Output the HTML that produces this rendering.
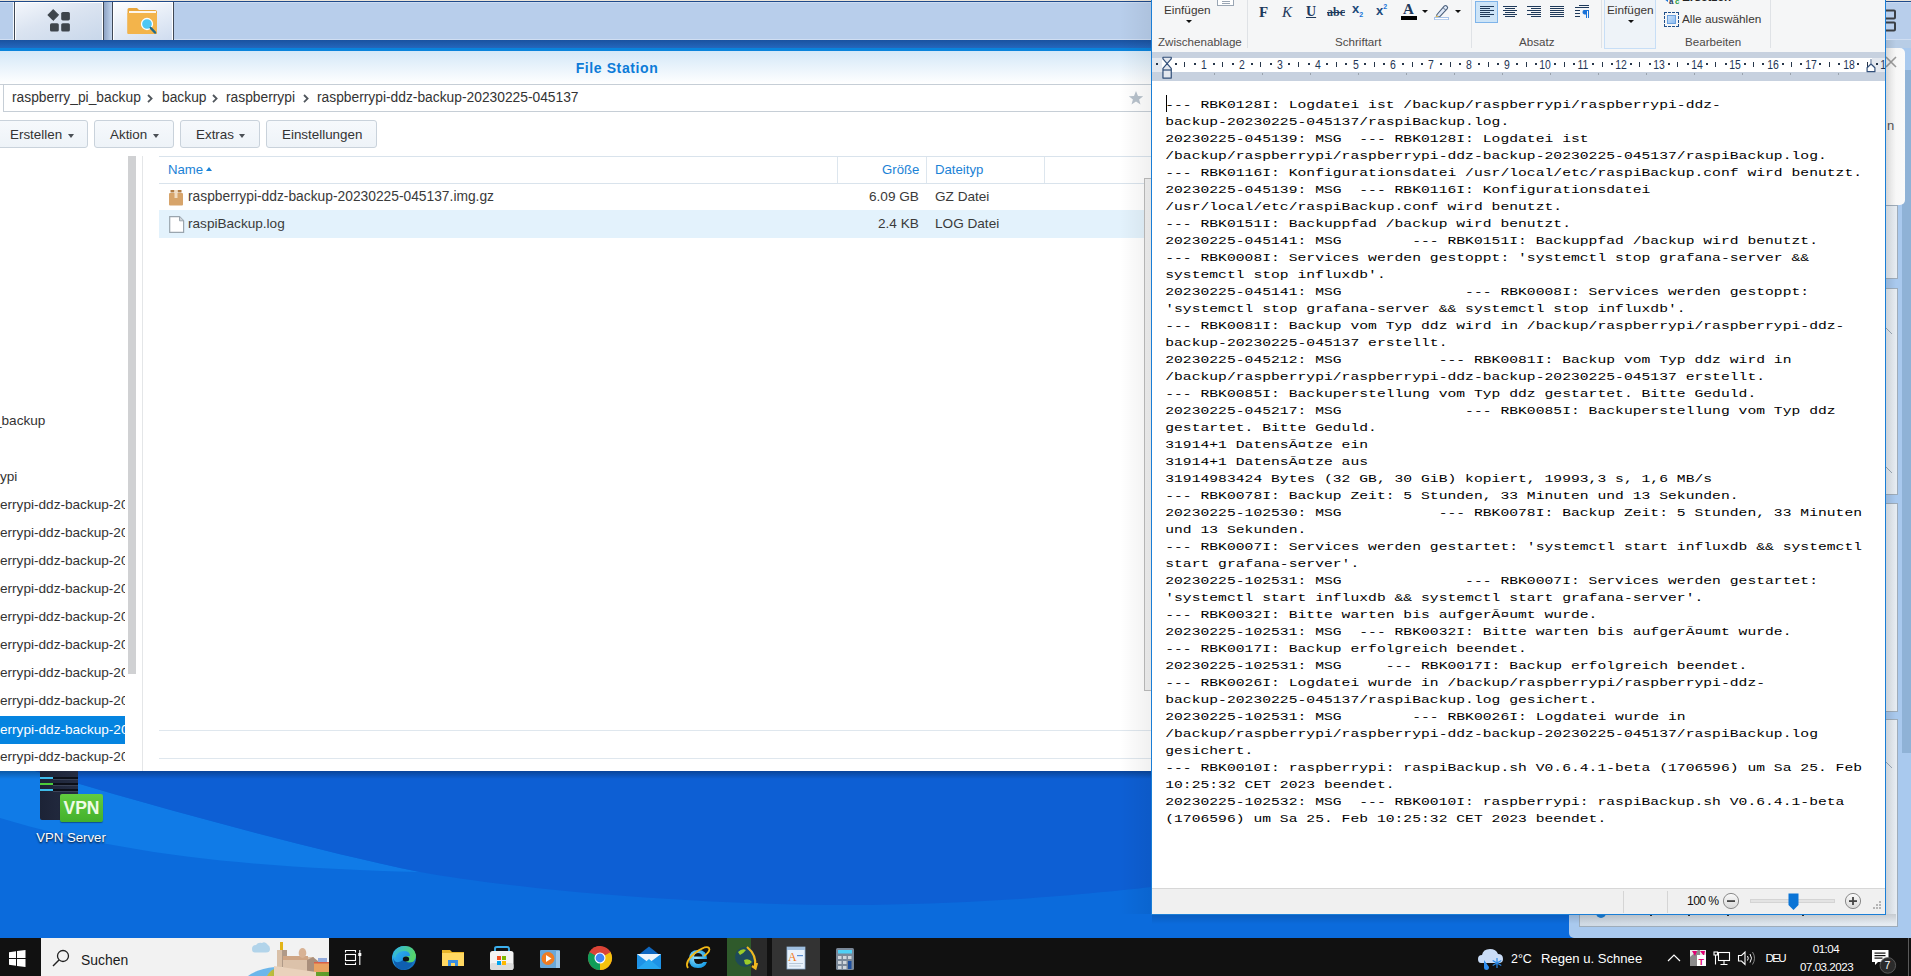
<!DOCTYPE html>
<html><head><meta charset="utf-8">
<style>
*{margin:0;padding:0;box-sizing:border-box}
html,body{width:1911px;height:976px;overflow:hidden;background:#0c62d6;font-family:"Liberation Sans",sans-serif}
.a{position:absolute}
#wall{left:0;top:0;width:1911px;height:976px}
/* DSM taskbar */
#dsmbar{left:0;top:0;width:1911px;height:40px;background:#b8ceeb;border-top:1px solid #ebe5da;box-shadow:inset 0 1px 0 #1f4a8a,inset 0 2px 0 #cddcf0,inset 0 -1px 0 #d0def2}
.dbtn{top:2px;height:38px;border-left:1px solid #3f4856;border-right:1px solid #3f4856;box-shadow:inset 1px 1px 0 #fff,inset -1px 0 0 #fff;background:linear-gradient(160deg,#f4f7fc 0%,#dbe4f1 45%,#c8d7ea 100%)}
/* file station */
#fs{left:0;top:40px;width:1151px;height:731px;background:#fff}
#fsbar{left:0;top:0;width:1151px;height:8px;background:linear-gradient(#1a52a0,#2467bd)}
#fsbar2{left:0;top:8px;width:1151px;height:3px;background:#0a84dc}
#fshead{left:0;top:11px;width:1151px;height:34px;background:linear-gradient(#d4e8f8,#ffffff);border-bottom:1px solid #c9cfd6}
#fstitle{left:0;top:20px;width:1234px;text-align:center;font-weight:bold;font-size:14px;color:#0c7bd8;letter-spacing:0.6px}
.crumb{left:3px;top:44px;width:1148px;height:28px;border:1px solid #c6ced6;border-right:none}
.ct{font-size:13.8px;color:#333;top:50px}
.tb{top:80px;height:28px;border:1px solid #c9d2db;border-radius:3px;background:linear-gradient(#f6f9fc,#eef3f8);font-size:13.4px;color:#333}
.tb span{position:absolute;top:6px}
.caret{position:absolute;width:0;height:0;border-left:3.5px solid transparent;border-right:3.5px solid transparent;border-top:4px solid #4a4f55}
.tree{font-size:13.6px;color:#333;left:0;white-space:nowrap;overflow:hidden;width:125px;height:28px;line-height:28px}
.gh{font-size:13.2px;color:#1b82d6}
.gc{font-size:13.6px;color:#3a3a3a}
/* wordpad */
#wp{left:1151px;top:0;width:735px;height:915px;overflow:hidden;border:1px solid #1a7ed6;border-top:none;background:#fff}
#ribbon{left:0;top:0;width:733px;height:52px;background:#f5f6f7}
.rl{font-size:11.6px;color:#4d4a48;top:35px}
.sep{top:0;width:1px;height:48px;background:#dfe2e6}
#ruler{left:0;top:52px;width:733px;height:29px;background:#c7d1df}
#rwhite{left:10px;top:6px;width:723px;height:14px;background:#fff}
#txt{left:13.2px;top:0;width:722px;height:880px}
.tl{left:0;font-family:"Liberation Mono",monospace;font-size:14.67px;letter-spacing:0.026px;line-height:17px;color:#000;white-space:pre;transform:scaleY(0.8);transform-origin:0 0}
.rn{top:5.9px;width:20px;text-align:center;font-size:12px;color:#1f3556;transform:scaleX(0.87)}
.rt{font-size:11.8px;color:#3b3633}
.tri{width:0;height:0;border-left:3px solid transparent;border-right:3px solid transparent;border-top:3.5px solid #111}
#status{left:0;top:888px;width:733px;height:26px;background:#f0f0f0;border-top:1px solid #d7d7d7}
/* taskbar */
#tbar{left:0;top:938px;width:1911px;height:38px;background:#111}
.tw{color:#fff;font-size:12.5px}
</style></head><body>
<!-- wallpaper -->
<svg id="wall" class="a" width="1911" height="976" viewBox="0 0 1911 976">
  <rect width="1911" height="976" fill="#0b6bdc"/>
  <path d="M0 771 L35 771 C 150 805, 300 847, 420 872 C 250 868, 120 854, 0 818 Z" fill="#107be7"/>
  <path d="M35 771 C 150 805, 300 847, 420 872 C 520 890, 700 906, 870 905 C 1000 903, 1100 893, 1160 886 C 1400 865, 1700 830, 1911 800 L1911 771 Z" fill="#0d5fd4"/>
  <rect x="0" y="771" width="1151" height="8" fill="url(#shd)"/>
  <defs><linearGradient id="shd" x1="0" y1="0" x2="0" y2="1"><stop offset="0" stop-color="#000" stop-opacity="0.28"/><stop offset="1" stop-color="#000" stop-opacity="0"/></linearGradient></defs>
</svg>

<!-- DSM top bar -->
<div id="dsmbar" class="a"></div>
<div class="a dbtn" style="left:14px;width:90px"></div>
<div class="a" style="left:13px;top:2px;width:1px;height:38px;background:#f4f8fd"></div>
<div class="a" style="left:104px;top:2px;width:8px;height:38px;background:linear-gradient(90deg,#8ea3c4,#c2d5ee)"></div>
<div class="a dbtn" style="left:112px;width:62px;background:linear-gradient(160deg,#ffffff 0%,#e6edf7 50%,#cfdcef 100%)"></div>
<!-- main menu icon -->
<svg class="a" style="left:46px;top:8px" width="26" height="26" viewBox="0 0 26 26">
  <path d="M7.2 1.6 L12.6 7 L7.2 12.4 L1.8 7 Z" fill="#3e454c" stroke="#3e454c" stroke-width="1" stroke-linejoin="round"/>
  <rect x="15.2" y="4" width="8.7" height="8.4" rx="1.6" fill="#3e454c"/>
  <rect x="4" y="15.2" width="8.8" height="8.4" rx="1.6" fill="#3e454c"/>
  <rect x="15.2" y="15.2" width="8.7" height="8.4" rx="1.6" fill="#3e454c"/>
</svg>
<!-- file station icon -->
<svg class="a" style="left:126px;top:7px" width="34" height="28" viewBox="0 0 34 28">
  <path d="M1.5 2.5 Q1.5 1 3 1 L11 1 L13 3 L29 3 Q31 3 31 5 L31 26 Q31 27 30 27 L2.5 27 Q1.5 27 1.5 26 Z" fill="#e9a73d"/>
  <rect x="3" y="4" width="27" height="3" fill="#fff" opacity="0.9"/>
  <path d="M1.5 6 L31 6 L31 26 Q31 27 30 27 L2.5 27 Q1.5 27 1.5 26 Z" fill="#f3b44b"/>
  <circle cx="21" cy="17" r="5.5" fill="#4fc7f3" stroke="#fff" stroke-width="1.3"/>
  <path d="M24.8 21 L29 25.5" stroke="#1f6a8c" stroke-width="2.5" stroke-linecap="round"/>
</svg>
<!-- right dsm icon -->
<svg class="a" style="left:1883px;top:9px" width="14" height="24" viewBox="0 0 14 24">
  <rect x="1" y="1.5" width="11" height="8" rx="1" fill="none" stroke="#3a3f45" stroke-width="2"/>
  <rect x="1" y="13.5" width="11" height="8" rx="1" fill="none" stroke="#3a3f45" stroke-width="2"/>
</svg>

<!-- DSM right widget panel -->
<div class="a" style="left:1569px;top:40px;width:342px;height:898px;background:#a9c9ee;border-bottom-left-radius:5px"></div>
<div class="a" style="left:1886px;top:40px;width:25px;height:8px;background:#b8cde6"></div>
<div class="a" style="left:1902px;top:70px;width:9px;height:683px;background:#8fb2d6"></div>
<div class="a" style="left:1579px;top:205px;width:319px;height:74px;background:linear-gradient(90deg,#d0dae4,#e6ecf2);border:1px solid #9eacba"></div>
<div class="a" style="left:1579px;top:288px;width:319px;height:207px;background:linear-gradient(90deg,#d0dae4,#e6ecf2);border:1px solid #9eacba"></div>
<div class="a" style="left:1579px;top:503px;width:319px;height:209px;background:linear-gradient(90deg,#d0dae4,#e6ecf2);border:1px solid #9eacba"></div>
<div class="a" style="left:1579px;top:719px;width:319px;height:208px;background:linear-gradient(90deg,#d0dae4,#e6ecf2);border:1px solid #9eacba"></div>
<div class="a" style="left:1596px;top:908px;width:10px;height:10px;border-radius:5px;background:#1a7fd8"></div>
<div class="a" style="left:1650px;top:914px;width:2px;height:2px;background:#333"></div><div class="a" style="left:1688px;top:914px;width:2px;height:2px;background:#333"></div><div class="a" style="left:1727px;top:914px;width:2px;height:2px;background:#333"></div><div class="a" style="left:1802px;top:914px;width:2px;height:2px;background:#333"></div>
<!-- notification popup -->
<div class="a" style="left:1870px;top:48px;width:35px;height:157px;background:linear-gradient(90deg,#d8d8d8,#f6f6f6 60%,#fafafa);border-radius:0 5px 5px 0"></div>
<svg class="a" style="left:1884px;top:55px" width="14" height="14" viewBox="0 0 14 14"><path d="M2 2 L12 12 M12 2 L2 12" stroke="#9a9a9a" stroke-width="1.6"/></svg>

<div class="a" style="left:1887px;top:118px;font-size:13px;color:#555">n</div>
<svg class="a" style="left:1884px;top:326px" width="14" height="300" viewBox="0 0 14 300"><path d="M2 2 L8 8 M2 141 L8 147" stroke="#9aa8b6" stroke-width="1"/></svg>
<svg class="a" style="left:1884px;top:760px" width="14" height="14" viewBox="0 0 14 14"><path d="M2 2 L8 8" stroke="#9aa8b6" stroke-width="1"/></svg>
<!-- FILE STATION -->
<div id="fs" class="a">
  <div id="fsbar" class="a"></div>
  <div id="fsbar2" class="a"></div>
  <div id="fshead" class="a"></div>
  <div id="fstitle" class="a">File Station</div>
  <div class="a crumb"></div>
  <div class="a ct" style="left:12px">raspberry_pi_backup</div>
  <div class="a ct" style="left:162px">backup</div>
  <div class="a ct" style="left:226px">raspberrypi</div>
  <div class="a ct" style="left:317px">raspberrypi-ddz-backup-20230225-045137</div>
  <svg class="a" style="left:146px;top:52.5px" width="8" height="12" viewBox="0 0 8 12"><path d="M2 2 L5.6 5.6 L2 9.2" fill="none" stroke="#50565c" stroke-width="1.8"/></svg>
  <svg class="a" style="left:210.7px;top:52.5px" width="8" height="12" viewBox="0 0 8 12"><path d="M2 2 L5.6 5.6 L2 9.2" fill="none" stroke="#50565c" stroke-width="1.8"/></svg>
  <svg class="a" style="left:301.7px;top:52.5px" width="8" height="12" viewBox="0 0 8 12"><path d="M2 2 L5.6 5.6 L2 9.2" fill="none" stroke="#50565c" stroke-width="1.8"/></svg>
  <svg class="a" style="left:1128px;top:50px" width="16" height="16" viewBox="0 0 16 16"><path d="M8 1 L10 6 L15.2 6.2 L11.1 9.4 L12.5 14.6 L8 11.6 L3.5 14.6 L4.9 9.4 L0.8 6.2 L6 6 Z" fill="#b8c2cc"/></svg>

  <div class="a tb" style="left:-5px;width:93px"><span style="left:14px">Erstellen</span><i class="caret" style="left:72px;top:13px"></i></div>
  <div class="a tb" style="left:94px;width:80px"><span style="left:15px">Aktion</span><i class="caret" style="left:58px;top:13px"></i></div>
  <div class="a tb" style="left:180px;width:80px"><span style="left:15px">Extras</span><i class="caret" style="left:58px;top:13px"></i></div>
  <div class="a tb" style="left:266px;width:111px"><span style="left:15px">Einstellungen</span></div>

  <!-- tree -->
  <div class="a" style="left:128px;top:116px;width:8px;height:518px;background:#d0d1d3"></div>
  <div class="a" style="left:142px;top:116px;width:1px;height:615px;background:#e4e6e8"></div>
  <div class="a tree" style="top:367px;text-indent:-6px">_backup</div>
  <div class="a tree" style="top:423px">ypi</div>
  <div class="a tree" style="top:451px">errypi-ddz-backup-20230225</div>
  <div class="a tree" style="top:479px">errypi-ddz-backup-20230225</div>
  <div class="a tree" style="top:507px">errypi-ddz-backup-20230225</div>
  <div class="a tree" style="top:535px">errypi-ddz-backup-20230225</div>
  <div class="a tree" style="top:563px">errypi-ddz-backup-20230225</div>
  <div class="a tree" style="top:591px">errypi-ddz-backup-20230225</div>
  <div class="a tree" style="top:619px">errypi-ddz-backup-20230225</div>
  <div class="a tree" style="top:647px">errypi-ddz-backup-20230225</div>
  <div class="a tree" style="top:676px;background:#0584e0;color:#fff">errypi-ddz-backup-20230225</div>
  <div class="a tree" style="top:703px">errypi-ddz-backup-20230225</div>

  <!-- grid -->
  <div class="a" style="left:159px;top:116px;width:992px;height:1px;background:#d9e3ec"></div>
  <div class="a" style="left:159px;top:143px;width:992px;height:1px;background:#d9e3ec"></div>
  <div class="a" style="left:837px;top:117px;width:1px;height:26px;background:#dde6ee"></div>
  <div class="a" style="left:926px;top:117px;width:1px;height:26px;background:#dde6ee"></div>
  <div class="a" style="left:1044px;top:117px;width:1px;height:26px;background:#dde6ee"></div>
  <div class="a gh" style="left:168px;top:122px">Name</div>
  <div class="a" style="left:206px;top:127px;width:0;height:0;border-left:3.5px solid transparent;border-right:3.5px solid transparent;border-bottom:4px solid #1b82d6"></div>
  <div class="a gh" style="left:882px;top:122px">Größe</div>
  <div class="a gh" style="left:935px;top:122px">Dateityp</div>
  <div class="a" style="left:159px;top:170px;width:986px;height:28px;background:#e3f2fc"></div>
  <svg class="a" style="left:169px;top:150px" width="15" height="16" viewBox="0 0 15 16">
    <rect x="0" y="3" width="14" height="12.5" rx="1" fill="#d7a46a"/>
    <rect x="1.5" y="0" width="4" height="2.5" fill="#b07c45"/><rect x="8.5" y="0" width="4" height="2.5" fill="#b07c45"/>
    <rect x="5.5" y="0" width="3" height="8" fill="#f1dcc2"/>
  </svg>
  <div class="a gc" style="left:188px;top:149px;font-size:13.8px">raspberrypi-ddz-backup-20230225-045137.img.gz</div>
  <svg class="a" style="left:169px;top:176px" width="16" height="17" viewBox="0 0 16 17">
    <path d="M0.7 0.7 L10.5 0.7 L14.6 4.8 L14.6 16.3 L0.7 16.3 Z" fill="#fff" stroke="#9aa5ae" stroke-width="1.2"/>
    <path d="M10.5 0.7 L10.5 4.8 L14.6 4.8" fill="#cdd3d8" stroke="#9aa5ae" stroke-width="1"/>
  </svg>
  <div class="a gc" style="left:188px;top:176px">raspiBackup.log</div>
  <div class="a gc" style="left:869px;top:149px">6.09 GB</div>
  <div class="a gc" style="left:935px;top:149px">GZ Datei</div>
  <div class="a gc" style="left:878px;top:176px">2.4 KB</div>
  <div class="a gc" style="left:935px;top:176px">LOG Datei</div>
  <div class="a" style="left:159px;top:690px;width:992px;height:1px;background:#dfe7ee"></div>
  <div class="a" style="left:159px;top:718px;width:992px;height:1px;background:#dfe7ee"></div>
  <!-- edge box -->
  <div class="a" style="left:1144px;top:138px;width:7px;height:513px;background:#f2f2f2;border:1px solid #bdbdbd;border-right:none"></div>
</div>
<!-- shadow of wordpad -->
<div class="a" style="left:1152px;top:914px;width:744px;height:10px;background:linear-gradient(rgba(0,0,0,0.14),rgba(0,0,0,0))"></div>
<div class="a" style="left:1886px;top:40px;width:10px;height:874px;background:linear-gradient(90deg,rgba(0,0,0,0.10),rgba(0,0,0,0))"></div>
<div class="a" style="left:1120px;top:0;width:31px;height:914px;background:linear-gradient(90deg,rgba(0,0,0,0),rgba(0,0,0,0.06))"></div>

<!-- VPN icon -->
<div class="a" style="left:40px;top:771px;width:38px;height:49px;background:linear-gradient(90deg,#1c2336,#252d43);border-radius:0 0 2px 2px"></div>
<div class="a" style="left:53px;top:777px;width:25px;height:2px;background:#0c0f18"></div>
<div class="a" style="left:53px;top:779px;width:25px;height:1px;background:#3a4256"></div>
<div class="a" style="left:53px;top:783px;width:25px;height:2px;background:#0c0f18"></div>
<div class="a" style="left:53px;top:785px;width:25px;height:1px;background:#3a4256"></div>
<div class="a" style="left:53px;top:789px;width:25px;height:2px;background:#0c0f18"></div>
<div class="a" style="left:53px;top:791px;width:25px;height:1px;background:#3a4256"></div>
<div class="a" style="left:40px;top:777px;width:13px;height:2px;background:#3fbbe8"></div>
<div class="a" style="left:40px;top:783px;width:13px;height:2px;background:#4ccc3a"></div>
<div class="a" style="left:40px;top:789px;width:13px;height:2px;background:#3fbbe8"></div>
<div class="a" style="left:60px;top:794px;width:43px;height:28px;background:linear-gradient(#62cc3e,#43b02c);border-radius:2px;box-shadow:0 1px 1px rgba(0,0,0,0.35)"></div>
<div class="a" style="left:60px;top:798px;width:43px;text-align:center;color:#eefbe6;font-size:17.5px;font-weight:bold;line-height:20px">VPN</div>
<div class="a" style="left:31px;top:830px;width:80px;text-align:center;color:#fff;font-size:13.2px;text-shadow:0 1px 2px rgba(0,0,0,0.9)">VPN Server</div>

<!-- WORDPAD -->
<div id="wp" class="a">
  <div id="ribbon" class="a">
    <!-- clipboard group -->
    <div class="a" style="left:65px;top:0;width:17px;height:6px;border:1px solid #9aa6b4;border-top:none;background:#fff"></div>
    <div class="a" style="left:70px;top:1px;width:8px;height:1px;background:#9aa6b4;box-shadow:0 2px 0 #9aa6b4"></div>
    <div class="a rt" style="left:12px;top:2.5px">Einfügen</div>
    <i class="a tri" style="left:34px;top:20px"></i>
    <div class="a rl" style="left:6px">Zwischenablage</div>
    <div class="a sep" style="left:95px"></div>
    <!-- font group -->
    <div class="a" style="left:107px;top:3.5px;font-family:'Liberation Serif',serif;font-weight:bold;font-size:15px;color:#1e3a5c">F</div>
    <div class="a" style="left:130px;top:3.5px;font-family:'Liberation Serif',serif;font-style:italic;font-size:15px;color:#1e3a5c">K</div>
    <div class="a" style="left:154px;top:3.5px;font-family:'Liberation Serif',serif;font-weight:bold;font-size:14px;color:#1e3a5c;text-decoration:underline">U</div>
    <div class="a" style="left:175px;top:4.5px;font-family:'Liberation Serif',serif;font-weight:bold;font-size:12px;color:#1e3a5c;text-decoration:line-through">abc</div>
    <div class="a" style="left:200px;top:1px;font-family:'Liberation Sans',sans-serif;font-weight:bold;font-size:13px;color:#1e4a7a">x<sub style="font-size:7px;color:#1a73d9">2</sub></div>
    <div class="a" style="left:224px;top:3px;font-family:'Liberation Sans',sans-serif;font-weight:bold;font-size:13px;color:#1e4a7a">x<sup style="font-size:7px;color:#1a73d9;vertical-align:6px">2</sup></div>
    <div class="a" style="left:251px;top:1px;font-family:'Liberation Serif',serif;font-weight:bold;font-size:15px;color:#1e3a5c">A</div>
    <div class="a" style="left:249px;top:16px;width:16px;height:4px;background:#000"></div>
    <i class="a tri" style="left:270px;top:10px"></i>
    <svg class="a" style="left:281px;top:3px" width="16" height="17" viewBox="0 0 16 17">
      <path d="M4 11.5 L11.2 3.2 Q12.4 2 13.6 3 L14.2 3.6 Q15.2 4.7 14.1 5.8 L6.8 13.6 L3 14.6 Z" fill="#dfe9f8" stroke="#4c607c" stroke-width="1.1" stroke-linejoin="round"/>
      <path d="M10 4.6 L13 7.4" stroke="#4c607c" stroke-width="0.9"/>
      <path d="M3.3 12.2 L6 14 L2.8 14.8 Z" fill="#e8c050"/>
      <rect x="1.5" y="14.5" width="14" height="2.2" fill="#fff" stroke="#a6c2e8" stroke-width="1"/>
    </svg>
    <i class="a tri" style="left:303px;top:10px"></i>
    <div class="a rl" style="left:183px">Schriftart</div>
    <div class="a sep" style="left:319px"></div>
    <!-- paragraph group -->
    <div class="a" style="left:323px;top:1px;width:23px;height:22px;background:#cde4f7;border:1px solid #7eb4ea"></div>
    <svg class="a" style="left:328px;top:5px" width="120" height="14" viewBox="0 0 120 14"><g fill="#1f3a5a"><rect x="0" y="1" width="14" height="1"/><rect x="23" y="1" width="14" height="1"/><rect x="47" y="1" width="14" height="1"/><rect x="70" y="1" width="14" height="1"/><rect x="0" y="3" width="10" height="1"/><rect x="25" y="3" width="10" height="1"/><rect x="51" y="3" width="10" height="1"/><rect x="70" y="3" width="14" height="1"/><rect x="0" y="5" width="14" height="1"/><rect x="23" y="5" width="14" height="1"/><rect x="47" y="5" width="14" height="1"/><rect x="70" y="5" width="14" height="1"/><rect x="0" y="7" width="10" height="1"/><rect x="25" y="7" width="10" height="1"/><rect x="51" y="7" width="10" height="1"/><rect x="70" y="7" width="14" height="1"/><rect x="0" y="9" width="14" height="1"/><rect x="23" y="9" width="14" height="1"/><rect x="47" y="9" width="14" height="1"/><rect x="70" y="9" width="14" height="1"/><rect x="0" y="11" width="10" height="1"/><rect x="25" y="11" width="10" height="1"/><rect x="51" y="11" width="10" height="1"/><rect x="70" y="11" width="14" height="1"/><rect x="99" y="0" width="10" height="1"/><rect x="95" y="2" width="14" height="1"/><rect x="95" y="5" width="5" height="1"/><rect x="95" y="8" width="5" height="1"/><rect x="95" y="11" width="5" height="1"/></g><path d="M104 5 L109 5 L109 13 L108 13 L108 6 L107 6 L107 13 L106 13 L106 9.5 Q102.5 9.5 102.5 7.2 Q102.5 5 104 5 Z" fill="#1a73d9"/></svg>
    <div class="a rl" style="left:367px">Absatz</div>
    <div class="a sep" style="left:449px"></div>
    <!-- editing group -->
    <div class="a" style="left:452px;top:0;width:52px;height:49px;background:#eef3f8;border:1px solid #c7def6;border-top:none"></div>
    <div class="a rt" style="left:455px;top:2.5px">Einfügen</div>
    <i class="a tri" style="left:476px;top:20px"></i>
    <svg class="a" style="left:511px;top:-4px" width="18" height="9" viewBox="0 0 18 9"><path d="M1 3 L5 0 L5 2 L9 2 L9 4 L5 4 L5 6 Z" fill="#1a73d9"/><text x="6" y="8" font-size="8" font-family="Liberation Sans" font-weight="bold" fill="#1e3a5c">a</text><text x="12" y="8" font-size="8" font-family="Liberation Sans" font-weight="bold" fill="#2a9a3a">c</text></svg>
    <div class="a rt" style="left:530px;top:-10px;font-weight:bold;color:#222">Ersetzen</div>
    <div class="a" style="left:512px;top:12px;width:15px;height:15px;border:1.3px dashed #1f4f8a"></div>
    <div class="a" style="left:515px;top:15px;width:9px;height:9px;background:linear-gradient(135deg,#c9e0fa,#8cbcf0);border:1px solid #6aa0de"></div>
    <div class="a rt" style="left:530px;top:12px">Alle auswählen</div>
    <div class="a rl" style="left:533px">Bearbeiten</div>
    <div class="a sep" style="left:618px"></div>
  </div>
  <div id="ruler" class="a">
    <div class="a" style="left:0;top:6px;width:733px;height:14px;background:#e4e8ef"></div>
    <div class="a" style="left:10px;top:6px;width:710px;height:14px;background:#fff"></div>
<div class="a rn" style="left:41.8px">1</div>
<div class="a rn" style="left:79.7px">2</div>
<div class="a rn" style="left:117.7px">3</div>
<div class="a rn" style="left:155.6px">4</div>
<div class="a rn" style="left:193.5px">5</div>
<div class="a rn" style="left:231.4px">6</div>
<div class="a rn" style="left:269.3px">7</div>
<div class="a rn" style="left:307.3px">8</div>
<div class="a rn" style="left:345.2px">9</div>
<div class="a rn" style="left:383.1px">10</div>
<div class="a rn" style="left:421.0px">11</div>
<div class="a rn" style="left:458.9px">12</div>
<div class="a rn" style="left:496.9px">13</div>
<div class="a rn" style="left:534.8px">14</div>
<div class="a rn" style="left:572.7px">15</div>
<div class="a rn" style="left:610.6px">16</div>
<div class="a rn" style="left:648.5px">17</div>
<div class="a rn" style="left:686.5px">18</div>
<div class="a rn" style="left:724.4px">19</div>
<div class="a" style="left:4px;top:11px;width:1.5px;height:1.5px;background:#27364a"></div>
<div class="a" style="left:23px;top:11px;width:1.5px;height:1.5px;background:#27364a"></div>
<div class="a" style="left:32px;top:10px;width:1px;height:4.8px;background:#27364a"></div>
<div class="a" style="left:42px;top:11px;width:1.5px;height:1.5px;background:#27364a"></div>
<div class="a" style="left:61px;top:11px;width:1.5px;height:1.5px;background:#27364a"></div>
<div class="a" style="left:70px;top:10px;width:1px;height:4.8px;background:#27364a"></div>
<div class="a" style="left:80px;top:11px;width:1.5px;height:1.5px;background:#27364a"></div>
<div class="a" style="left:99px;top:11px;width:1.5px;height:1.5px;background:#27364a"></div>
<div class="a" style="left:108px;top:10px;width:1px;height:4.8px;background:#27364a"></div>
<div class="a" style="left:118px;top:11px;width:1.5px;height:1.5px;background:#27364a"></div>
<div class="a" style="left:136px;top:11px;width:1.5px;height:1.5px;background:#27364a"></div>
<div class="a" style="left:146px;top:10px;width:1px;height:4.8px;background:#27364a"></div>
<div class="a" style="left:156px;top:11px;width:1.5px;height:1.5px;background:#27364a"></div>
<div class="a" style="left:174px;top:11px;width:1.5px;height:1.5px;background:#27364a"></div>
<div class="a" style="left:184px;top:10px;width:1px;height:4.8px;background:#27364a"></div>
<div class="a" style="left:193px;top:11px;width:1.5px;height:1.5px;background:#27364a"></div>
<div class="a" style="left:212px;top:11px;width:1.5px;height:1.5px;background:#27364a"></div>
<div class="a" style="left:222px;top:10px;width:1px;height:4.8px;background:#27364a"></div>
<div class="a" style="left:231px;top:11px;width:1.5px;height:1.5px;background:#27364a"></div>
<div class="a" style="left:250px;top:11px;width:1.5px;height:1.5px;background:#27364a"></div>
<div class="a" style="left:260px;top:10px;width:1px;height:4.8px;background:#27364a"></div>
<div class="a" style="left:269px;top:11px;width:1.5px;height:1.5px;background:#27364a"></div>
<div class="a" style="left:288px;top:11px;width:1.5px;height:1.5px;background:#27364a"></div>
<div class="a" style="left:298px;top:10px;width:1px;height:4.8px;background:#27364a"></div>
<div class="a" style="left:307px;top:11px;width:1.5px;height:1.5px;background:#27364a"></div>
<div class="a" style="left:326px;top:11px;width:1.5px;height:1.5px;background:#27364a"></div>
<div class="a" style="left:336px;top:10px;width:1px;height:4.8px;background:#27364a"></div>
<div class="a" style="left:345px;top:11px;width:1.5px;height:1.5px;background:#27364a"></div>
<div class="a" style="left:364px;top:11px;width:1.5px;height:1.5px;background:#27364a"></div>
<div class="a" style="left:374px;top:10px;width:1px;height:4.8px;background:#27364a"></div>
<div class="a" style="left:383px;top:11px;width:1.5px;height:1.5px;background:#27364a"></div>
<div class="a" style="left:402px;top:11px;width:1.5px;height:1.5px;background:#27364a"></div>
<div class="a" style="left:412px;top:10px;width:1px;height:4.8px;background:#27364a"></div>
<div class="a" style="left:421px;top:11px;width:1.5px;height:1.5px;background:#27364a"></div>
<div class="a" style="left:440px;top:11px;width:1.5px;height:1.5px;background:#27364a"></div>
<div class="a" style="left:450px;top:10px;width:1px;height:4.8px;background:#27364a"></div>
<div class="a" style="left:459px;top:11px;width:1.5px;height:1.5px;background:#27364a"></div>
<div class="a" style="left:478px;top:11px;width:1.5px;height:1.5px;background:#27364a"></div>
<div class="a" style="left:487px;top:10px;width:1px;height:4.8px;background:#27364a"></div>
<div class="a" style="left:497px;top:11px;width:1.5px;height:1.5px;background:#27364a"></div>
<div class="a" style="left:516px;top:11px;width:1.5px;height:1.5px;background:#27364a"></div>
<div class="a" style="left:525px;top:10px;width:1px;height:4.8px;background:#27364a"></div>
<div class="a" style="left:535px;top:11px;width:1.5px;height:1.5px;background:#27364a"></div>
<div class="a" style="left:554px;top:11px;width:1.5px;height:1.5px;background:#27364a"></div>
<div class="a" style="left:563px;top:10px;width:1px;height:4.8px;background:#27364a"></div>
<div class="a" style="left:573px;top:11px;width:1.5px;height:1.5px;background:#27364a"></div>
<div class="a" style="left:592px;top:11px;width:1.5px;height:1.5px;background:#27364a"></div>
<div class="a" style="left:601px;top:10px;width:1px;height:4.8px;background:#27364a"></div>
<div class="a" style="left:610px;top:11px;width:1.5px;height:1.5px;background:#27364a"></div>
<div class="a" style="left:630px;top:11px;width:1.5px;height:1.5px;background:#27364a"></div>
<div class="a" style="left:639px;top:10px;width:1px;height:4.8px;background:#27364a"></div>
<div class="a" style="left:648px;top:11px;width:1.5px;height:1.5px;background:#27364a"></div>
<div class="a" style="left:667px;top:11px;width:1.5px;height:1.5px;background:#27364a"></div>
<div class="a" style="left:677px;top:10px;width:1px;height:4.8px;background:#27364a"></div>
<div class="a" style="left:686px;top:11px;width:1.5px;height:1.5px;background:#27364a"></div>
<div class="a" style="left:705px;top:11px;width:1.5px;height:1.5px;background:#27364a"></div>
<div class="a" style="left:715px;top:10px;width:1px;height:4.8px;background:#27364a"></div>
<div class="a" style="left:724px;top:11px;width:1.5px;height:1.5px;background:#27364a"></div>
<div class="a" style="left:61.9px;top:21px;width:1px;height:2px;background:#9aa3ad"></div>
<div class="a" style="left:109.9px;top:21px;width:1px;height:2px;background:#9aa3ad"></div>
<div class="a" style="left:157.9px;top:21px;width:1px;height:2px;background:#9aa3ad"></div>
<div class="a" style="left:205.9px;top:21px;width:1px;height:2px;background:#9aa3ad"></div>
<div class="a" style="left:253.9px;top:21px;width:1px;height:2px;background:#9aa3ad"></div>
<div class="a" style="left:301.9px;top:21px;width:1px;height:2px;background:#9aa3ad"></div>
<div class="a" style="left:349.9px;top:21px;width:1px;height:2px;background:#9aa3ad"></div>
<div class="a" style="left:397.9px;top:21px;width:1px;height:2px;background:#9aa3ad"></div>
<div class="a" style="left:445.9px;top:21px;width:1px;height:2px;background:#9aa3ad"></div>
<div class="a" style="left:493.9px;top:21px;width:1px;height:2px;background:#9aa3ad"></div>
<div class="a" style="left:541.9px;top:21px;width:1px;height:2px;background:#9aa3ad"></div>
<div class="a" style="left:589.9px;top:21px;width:1px;height:2px;background:#9aa3ad"></div>
<div class="a" style="left:637.9px;top:21px;width:1px;height:2px;background:#9aa3ad"></div>
<div class="a" style="left:685.9px;top:21px;width:1px;height:2px;background:#9aa3ad"></div>
    <svg class="a" style="left:9.6px;top:3.7px" width="10.4" height="23.3" viewBox="0 0 11 24">
      <path d="M1 1 L9.8 1 L9.8 2.8 L5.4 7.8 L1 2.8 Z M5.4 7.8 L9.8 12.8 L9.8 23 L1 23 L1 12.8 Z" fill="#e4e8ef" stroke="#33507a" stroke-width="1.3" stroke-linejoin="round"/>
      <path d="M1 14.5 L9.8 14.5" stroke="#33507a" stroke-width="1.3"/>
    </svg>
    <svg class="a" style="left:713.5px;top:6px" width="10" height="15" viewBox="0 0 11 16">
      <path d="M5.5 1 L5.5 6" stroke="#33507a" stroke-width="1"/>
      <path d="M1.2 14.8 L1.2 10.5 L5.5 6.3 L9.8 10.5 L9.8 14.8 Z" fill="#fff" stroke="#33507a" stroke-width="1.3" stroke-linejoin="round"/>
    </svg>
  </div>
  <div id="txt" class="a"><div class="a tl" style="top:97.97px">--- RBK0128I: Logdatei ist /backup/raspberrypi/raspberrypi-ddz-</div>
<div class="a tl" style="top:114.97px">backup-20230225-045137/raspiBackup.log.</div>
<div class="a tl" style="top:131.97px">20230225-045139: MSG  --- RBK0128I: Logdatei ist</div>
<div class="a tl" style="top:148.97px">/backup/raspberrypi/raspberrypi-ddz-backup-20230225-045137/raspiBackup.log.</div>
<div class="a tl" style="top:165.97px">--- RBK0116I: Konfigurationsdatei /usr/local/etc/raspiBackup.conf wird benutzt.</div>
<div class="a tl" style="top:182.97px">20230225-045139: MSG  --- RBK0116I: Konfigurationsdatei</div>
<div class="a tl" style="top:199.97px">/usr/local/etc/raspiBackup.conf wird benutzt.</div>
<div class="a tl" style="top:216.97px">--- RBK0151I: Backuppfad /backup wird benutzt.</div>
<div class="a tl" style="top:233.97px">20230225-045141: MSG        --- RBK0151I: Backuppfad /backup wird benutzt.</div>
<div class="a tl" style="top:250.97px">--- RBK0008I: Services werden gestoppt: 'systemctl stop grafana-server &amp;&amp;</div>
<div class="a tl" style="top:267.97px">systemctl stop influxdb'.</div>
<div class="a tl" style="top:284.97px">20230225-045141: MSG              --- RBK0008I: Services werden gestoppt:</div>
<div class="a tl" style="top:301.97px">'systemctl stop grafana-server &amp;&amp; systemctl stop influxdb'.</div>
<div class="a tl" style="top:318.97px">--- RBK0081I: Backup vom Typ ddz wird in /backup/raspberrypi/raspberrypi-ddz-</div>
<div class="a tl" style="top:335.97px">backup-20230225-045137 erstellt.</div>
<div class="a tl" style="top:352.97px">20230225-045212: MSG           --- RBK0081I: Backup vom Typ ddz wird in</div>
<div class="a tl" style="top:369.97px">/backup/raspberrypi/raspberrypi-ddz-backup-20230225-045137 erstellt.</div>
<div class="a tl" style="top:386.97px">--- RBK0085I: Backuperstellung vom Typ ddz gestartet. Bitte Geduld.</div>
<div class="a tl" style="top:403.97px">20230225-045217: MSG              --- RBK0085I: Backuperstellung vom Typ ddz</div>
<div class="a tl" style="top:420.97px">gestartet. Bitte Geduld.</div>
<div class="a tl" style="top:437.97px">31914+1 DatensÃ¤tze ein</div>
<div class="a tl" style="top:454.97px">31914+1 DatensÃ¤tze aus</div>
<div class="a tl" style="top:471.97px">31914983424 Bytes (32 GB, 30 GiB) kopiert, 19993,3 s, 1,6 MB/s</div>
<div class="a tl" style="top:488.97px">--- RBK0078I: Backup Zeit: 5 Stunden, 33 Minuten und 13 Sekunden.</div>
<div class="a tl" style="top:505.97px">20230225-102530: MSG           --- RBK0078I: Backup Zeit: 5 Stunden, 33 Minuten</div>
<div class="a tl" style="top:522.97px">und 13 Sekunden.</div>
<div class="a tl" style="top:539.97px">--- RBK0007I: Services werden gestartet: 'systemctl start influxdb &amp;&amp; systemctl</div>
<div class="a tl" style="top:556.97px">start grafana-server'.</div>
<div class="a tl" style="top:573.97px">20230225-102531: MSG              --- RBK0007I: Services werden gestartet:</div>
<div class="a tl" style="top:590.97px">'systemctl start influxdb &amp;&amp; systemctl start grafana-server'.</div>
<div class="a tl" style="top:607.97px">--- RBK0032I: Bitte warten bis aufgerÃ¤umt wurde.</div>
<div class="a tl" style="top:624.97px">20230225-102531: MSG  --- RBK0032I: Bitte warten bis aufgerÃ¤umt wurde.</div>
<div class="a tl" style="top:641.97px">--- RBK0017I: Backup erfolgreich beendet.</div>
<div class="a tl" style="top:658.97px">20230225-102531: MSG     --- RBK0017I: Backup erfolgreich beendet.</div>
<div class="a tl" style="top:675.97px">--- RBK0026I: Logdatei wurde in /backup/raspberrypi/raspberrypi-ddz-</div>
<div class="a tl" style="top:692.97px">backup-20230225-045137/raspiBackup.log gesichert.</div>
<div class="a tl" style="top:709.97px">20230225-102531: MSG        --- RBK0026I: Logdatei wurde in</div>
<div class="a tl" style="top:726.97px">/backup/raspberrypi/raspberrypi-ddz-backup-20230225-045137/raspiBackup.log</div>
<div class="a tl" style="top:743.97px">gesichert.</div>
<div class="a tl" style="top:760.97px">--- RBK0010I: raspberrypi: raspiBackup.sh V0.6.4.1-beta (1706596) um Sa 25. Feb</div>
<div class="a tl" style="top:777.97px">10:25:32 CET 2023 beendet.</div>
<div class="a tl" style="top:794.97px">20230225-102532: MSG  --- RBK0010I: raspberrypi: raspiBackup.sh V0.6.4.1-beta</div>
<div class="a tl" style="top:811.97px">(1706596) um Sa 25. Feb 10:25:32 CET 2023 beendet.</div></div>
  <div class="a" style="left:14px;top:95px;width:1px;height:17px;background:#000"></div>
  <div id="status" class="a">
    <div class="a" style="left:471px;top:2px;width:1px;height:22px;background:#d5d5d5"></div>
    <div class="a" style="left:515px;top:2px;width:1px;height:22px;background:#d5d5d5"></div>
    <div class="a" style="left:535px;top:5px;font-size:12.2px;color:#111;letter-spacing:-0.6px">100 %</div>
    <svg class="a" style="left:570px;top:3px" width="18" height="18" viewBox="0 0 18 18"><defs><linearGradient id="bg1" x1="0" y1="0" x2="0" y2="1"><stop offset="0" stop-color="#fafafa"/><stop offset="1" stop-color="#d8d8d8"/></linearGradient></defs><circle cx="9" cy="9" r="7.6" fill="url(#bg1)" stroke="#8a8a8a" stroke-width="1"/><rect x="5" y="8.2" width="8" height="1.8" fill="#444"/></svg>
    <div class="a" style="left:598px;top:10px;width:85px;height:4px;background:#e3e3e3;border:1px solid #d4d4d4"></div>
    <svg class="a" style="left:636px;top:4px" width="11" height="18" viewBox="0 0 11 18"><path d="M0.5 0.5 L10.5 0.5 L10.5 12 L5.5 17 L0.5 12 Z" fill="#0a74d6"/></svg>
    <svg class="a" style="left:692px;top:3px" width="18" height="18" viewBox="0 0 18 18"><circle cx="9" cy="9" r="7.6" fill="url(#bg1)" stroke="#8a8a8a" stroke-width="1"/><rect x="5" y="8.2" width="8" height="1.8" fill="#444"/><rect x="8.1" y="5" width="1.8" height="8" fill="#444"/></svg>
    <svg class="a" style="left:721px;top:12px" width="10" height="10" viewBox="0 0 10 10"><g fill="#b5b5b5"><rect x="6" y="0" width="2" height="2"/><rect x="3" y="3" width="2" height="2"/><rect x="6" y="3" width="2" height="2"/><rect x="0" y="6" width="2" height="2"/><rect x="3" y="6" width="2" height="2"/><rect x="6" y="6" width="2" height="2"/></g></svg>
  </div>
</div>

<!-- Windows taskbar -->
<div id="tbar" class="a"></div>
<svg class="a" style="left:9px;top:950px" width="17" height="17" viewBox="0 0 17 17">
  <path d="M0 2.3 L7 1.3 L7 8 L0 8 Z M8 1.1 L16.5 0 L16.5 8 L8 8 Z M0 9 L7 9 L7 15.7 L0 14.7 Z M8 9 L16.5 9 L16.5 17 L8 15.9 Z" fill="#fff"/>
</svg>
<div class="a" style="left:41px;top:938px;width:288px;height:38px;background:#f2f2f2;overflow:hidden">
  <svg class="a" style="left:0;top:0" width="288" height="38" viewBox="0 0 288 38">
    <defs><linearGradient id="hill" x1="0" y1="0" x2="1" y2="0"><stop offset="0" stop-color="#c9c040"/><stop offset="0.4" stop-color="#7eaa30"/><stop offset="1" stop-color="#5a9a2a"/></linearGradient></defs>
    <path d="M207 38 Q216 31 234 29 L236 38 Z" fill="#6cb6ea"/>
    <path d="M226 38 Q230 31 236 30 L288 29 L288 38 Z" fill="url(#hill)"/>
    <path d="M211 11 Q211 7 215 7 Q217 4 221 5 Q224 3 227 7 Q229 8 229 11 Q229 14.5 225 14.5 L214 14.5 Q211 14.5 211 11 Z" fill="#b2d4ea"/>
    <rect x="236" y="12" width="10" height="17" fill="#d9c0a8"/>
    <rect x="241" y="12" width="5" height="17" fill="#b09a88"/>
    <rect x="239" y="4" width="3" height="8" fill="#e2b418"/>
    <rect x="242" y="19" width="31" height="15" fill="#dcc2aa"/>
    <rect x="242" y="18" width="25" height="4" fill="#cfa584"/>
    <path d="M266 22 L272 19 L277 23 L277 34 L266 34 Z" fill="#a98f7c"/>
    <ellipse cx="261.5" cy="15" rx="3.8" ry="5" fill="#d8b294"/>
    <rect x="277" y="20" width="9" height="6" fill="#93abdc"/>
    <rect x="273" y="24" width="15" height="10" fill="#e9a262"/>
    <rect x="273" y="24" width="15" height="1.5" fill="#d86048"/>
    <path d="M233 28 L275 34 L275 38 L233 38 Z" fill="#ead2bc"/>
  </svg>
</div>
<svg class="a" style="left:52px;top:949px" width="18" height="18" viewBox="0 0 18 18"><circle cx="11" cy="7" r="5.5" fill="none" stroke="#222" stroke-width="1.3"/><path d="M7 11 L1 17" stroke="#222" stroke-width="1.5"/></svg>
<div class="a" style="left:81px;top:951.5px;font-size:13.9px;color:#1a1a1a">Suchen</div>

<svg class="a" style="left:330px;top:938px" width="1581" height="38" viewBox="330 938 1581 38">
  <!-- task view -->
  <g stroke="#fff" stroke-width="1.1" fill="none">
    <path d="M345.5 952.5 L345.5 950.5 L355.5 950.5 L355.5 952.5"/>
    <rect x="345.5" y="954.5" width="10" height="6"/>
    <path d="M345.5 962.5 L345.5 964.5 L355.5 964.5 L355.5 962.5"/>
    <path d="M359.8 950 L359.8 965"/>
  </g>
  <rect x="358.3" y="953" width="3" height="3" fill="#fff"/>
  <!-- edge -->
  <defs>
    <linearGradient id="edg" x1="0" y1="0" x2="1" y2="1"><stop offset="0" stop-color="#35c1f1"/><stop offset="0.6" stop-color="#1e8ee0"/><stop offset="1" stop-color="#0c5aa6"/></linearGradient>
    <linearGradient id="edg2" x1="0" y1="0" x2="1" y2="0.3"><stop offset="0" stop-color="#2fb5e8"/><stop offset="1" stop-color="#56d46a"/></linearGradient>
  </defs>
  <circle cx="404" cy="958" r="12" fill="url(#edg)"/>
  <path d="M393 955 Q396 946 405 946 Q414 946 416 955 Q416 962 409 963 Q404 963 403 959 Q403 956 408 956 L410 956 Q410 951 404 951 Q397 951 395 958 Z" fill="url(#edg2)"/>
  <path d="M404 959 Q406 964 413 962 Q410 969 403 970 Q394 969 393 958 Q396 966 404 959 Z" fill="#0f5fb0"/>
  <ellipse cx="406" cy="959" rx="3.2" ry="2.5" fill="#111"/>
  <!-- explorer -->
  <path d="M442 950 L450 950 L452 952 L464 952 L464 966 L442 966 Z" fill="#e8b52a"/>
  <rect x="442" y="953" width="22" height="13" fill="#ffd862"/>
  <path d="M448 966 L448 960 L458 960 L458 966 L455 966 L455 963 L451 963 L451 966 Z" fill="#3a8ee2"/>
  <!-- store -->
  <path d="M495 951 L495 948.5 Q495 947 497 947 L507 947 Q509 947 509 948.5 L509 951" fill="none" stroke="#3cb0ee" stroke-width="1.8"/>
  <rect x="490" y="951" width="23.5" height="19" rx="2.5" fill="#f4f4f4"/>
  <rect x="490" y="963" width="23.5" height="7" rx="2.5" fill="#dcdcdc"/>
  <rect x="497" y="956" width="4" height="4" fill="#f25022"/><rect x="502" y="956" width="4" height="4" fill="#7fba00"/>
  <rect x="497" y="961" width="4" height="4" fill="#00a4ef"/><rect x="502" y="961" width="4" height="4" fill="#ffb900"/>
  <!-- media player -->
  <rect x="540" y="950" width="20" height="18" rx="1" fill="#6aa7d8"/>
  <rect x="556" y="951" width="4" height="17" fill="#9cc6e8"/>
  <circle cx="548" cy="958.5" r="6.5" fill="#f07c22"/>
  <path d="M546 955 L546 962 L551.5 958.5 Z" fill="#fff"/>
  <!-- chrome -->
  <circle cx="600" cy="958" r="12" fill="#db4437"/>
  <path d="M600 958 L610.4 952 A12 12 0 0 1 600 970 Z" fill="#f4c20d"/>
  <path d="M600 958 L600 970 A12 12 0 0 1 589.6 952 Z" fill="#0f9d58"/>
  <path d="M600 958 L589.6 952 A12 12 0 0 1 600 946 L610.4 952 Z" fill="#db4437"/>
  <circle cx="600" cy="958" r="5.5" fill="#fff"/>
  <circle cx="600" cy="958" r="4.4" fill="#4285f4"/>
  <!-- mail -->
  <path d="M637 956 L649 946.5 L661 956 Z" fill="#0e67c0"/>
  <rect x="637" y="954" width="24" height="15" fill="#1e92e6"/>
  <path d="M637 954 L661 954 L649 963 Z" fill="#eef5fb"/>
  <path d="M637 969 L649 959 L661 969 Z" fill="#27a6f0"/>
  <!-- IE -->
  <defs><radialGradient id="ieg" cx="0.4" cy="0.4" r="0.6"><stop offset="0" stop-color="#9fe6ff"/><stop offset="1" stop-color="#1c9fe6"/></radialGradient></defs>
  <path d="M689 959 Q689 950 698 950 Q707 950 707 959 L694 959 Q694 964 698.5 964 Q702 964 703.5 962 L707 962 Q705 968 698 968 Q689 968 689 959 Z M694 956.5 L702.5 956.5 Q702 953 698 953 Q694.5 953 694 956.5 Z" fill="url(#ieg)"/>
  <path d="M688 968 Q684 962 695 953 Q706 945 709 948 Q711 951 704 956" fill="none" stroke="#f3b916" stroke-width="1.8"/>
  <!-- progress app -->
  <rect x="727" y="938" width="24" height="38" fill="#2f5a2b"/>
  <rect x="751" y="938" width="16" height="38" fill="#2a2a2a"/>
  <circle cx="745" cy="957" r="10" fill="#1e4a5a"/>
  <path d="M738 952 Q742 948 746 950 Q743 954 740 955 Z M744 960 Q749 958 752 962 Q748 966 745 964 Z" fill="#9ccc2a"/>
  <path d="M747 947 Q757 955 755 967 M752 966 L755.5 968.5 L757 963" fill="none" stroke="#f0b820" stroke-width="2.2"/>
  <!-- wordpad -->
  <rect x="772" y="938" width="48" height="38" fill="#333"/>
  <rect x="787" y="947" width="18" height="22" fill="#e9f2fb" stroke="#8fb0d0" stroke-width="0.8"/>
  <rect x="787" y="947" width="18" height="3" fill="#9fbfe0"/>
  <text x="788" y="961" font-family="Liberation Serif" font-size="12" fill="#f47a20">A</text>
  <rect x="797" y="955" width="6" height="1.2" fill="#5a8ed0"/>
  <rect x="789" y="963" width="14" height="1" fill="#b8c8d8"/><rect x="789" y="965.5" width="12" height="1" fill="#b8c8d8"/>
  <!-- calculator -->
  <rect x="836" y="948" width="18" height="22" rx="1.5" fill="#7a8898"/>
  <rect x="838" y="950" width="14" height="3.5" fill="#4fd0f5"/>
  <g fill="#cfd6dc"><rect x="838" y="956" width="3.5" height="3"/><rect x="843" y="956" width="3.5" height="3"/><rect x="848" y="956" width="3.5" height="3"/><rect x="838" y="961" width="3.5" height="3"/><rect x="843" y="961" width="3.5" height="3"/><rect x="838" y="966" width="3.5" height="3"/><rect x="843" y="966" width="3.5" height="3"/></g>
  <rect x="848" y="961" width="3.5" height="8" fill="#1d4f9e"/>

  <!-- weather -->
  <path d="M1481 963 Q1478 963 1478 959 Q1478 955 1482 955 Q1483 949 1490 949 Q1496 949 1498 954 Q1503 954 1503 959 Q1503 963 1499 963 Z" fill="#c9dcf6"/>
  <path d="M1484 960 L1484 968 Q1484 970 1486.5 970 Q1489 970 1489 967 Z" fill="#2f8ef0"/>
  <g stroke="#2a8ae8" stroke-width="1.2"><path d="M1497 958 L1497 968 M1492.7 960.5 L1501.3 965.5 M1492.7 965.5 L1501.3 960.5"/></g>
  <text x="1511" y="963" font-family="Liberation Sans" font-size="12.4" fill="#fff">2°C</text>
  <text x="1541" y="963" font-family="Liberation Sans" font-size="13.1" fill="#fff">Regen u. Schnee</text>
  <path d="M1668 961 L1674 955 L1680 961" fill="none" stroke="#fff" stroke-width="1.2"/>
  <!-- telekom icon -->
  <rect x="1690" y="950" width="16" height="16" fill="#e8e8e8"/>
  <path d="M1690 966 L1690 957 L1698 950 L1700 950 L1700 966 Z" fill="#8a8a8a"/>
  <path d="M1692 951 L1697 951 L1695 956 Z M1700 951 L1705 951 L1704 956 Z" fill="#e20074"/>
  <rect x="1697" y="955" width="9" height="11" fill="#fff"/>
  <text x="1698.5" y="965" font-family="Liberation Sans" font-weight="bold" font-size="9" fill="#e20074">T</text>
  <!-- network -->
  <g fill="none" stroke="#fff" stroke-width="1.1">
    <rect x="1718.5" y="952.5" width="11" height="8"/>
    <path d="M1724 960.5 L1724 964.5 M1720.5 964.5 L1727.5 964.5 M1715.5 955 L1715.5 964.5"/>
    <rect x="1714" y="952" width="3.5" height="3"/>
  </g>
  <!-- speaker -->
  <path d="M1738.5 955.5 L1741.5 955.5 L1745 952 L1745 964.5 L1741.5 961 L1738.5 961 Z" fill="none" stroke="#fff" stroke-width="1.1"/>
  <path d="M1747.5 956 Q1749 958.2 1747.5 960.5 M1750 954 Q1753 958.2 1750 962.5" fill="none" stroke="#fff" stroke-width="1"/>
  <path d="M1752.5 952 Q1756.5 958.2 1752.5 964.5" fill="none" stroke="#888" stroke-width="1"/>
  <text x="1765.5" y="962" font-family="Liberation Sans" font-size="11.6" fill="#fff" textLength="21.2">DEU</text>
  <text x="1812.7" y="953" font-family="Liberation Sans" font-size="11.6" fill="#fff" textLength="27">01:04</text>
  <text x="1800" y="970.6" font-family="Liberation Sans" font-size="11.6" fill="#fff" textLength="53.6">07.03.2023</text>
  <!-- notification -->
  <path d="M1872 950 L1888.5 950 L1888.5 962 L1878 962 L1875 965 L1875 962 L1872 962 Z" fill="#fff"/>
  <g fill="#111"><rect x="1874.5" y="952.5" width="11" height="1.2"/><rect x="1874.5" y="955" width="11" height="1.2"/><rect x="1874.5" y="957.5" width="8" height="1.2"/></g>
  <circle cx="1887.8" cy="965.4" r="7.8" fill="#2b2b2b" stroke="#666" stroke-width="0.8"/>
  <text x="1884.6" y="969.4" font-family="Liberation Sans" font-size="10.5" fill="#fff">7</text>
  <rect x="1908" y="938" width="1" height="38" fill="#5a5a5a"/>
</svg>
</body></html>
